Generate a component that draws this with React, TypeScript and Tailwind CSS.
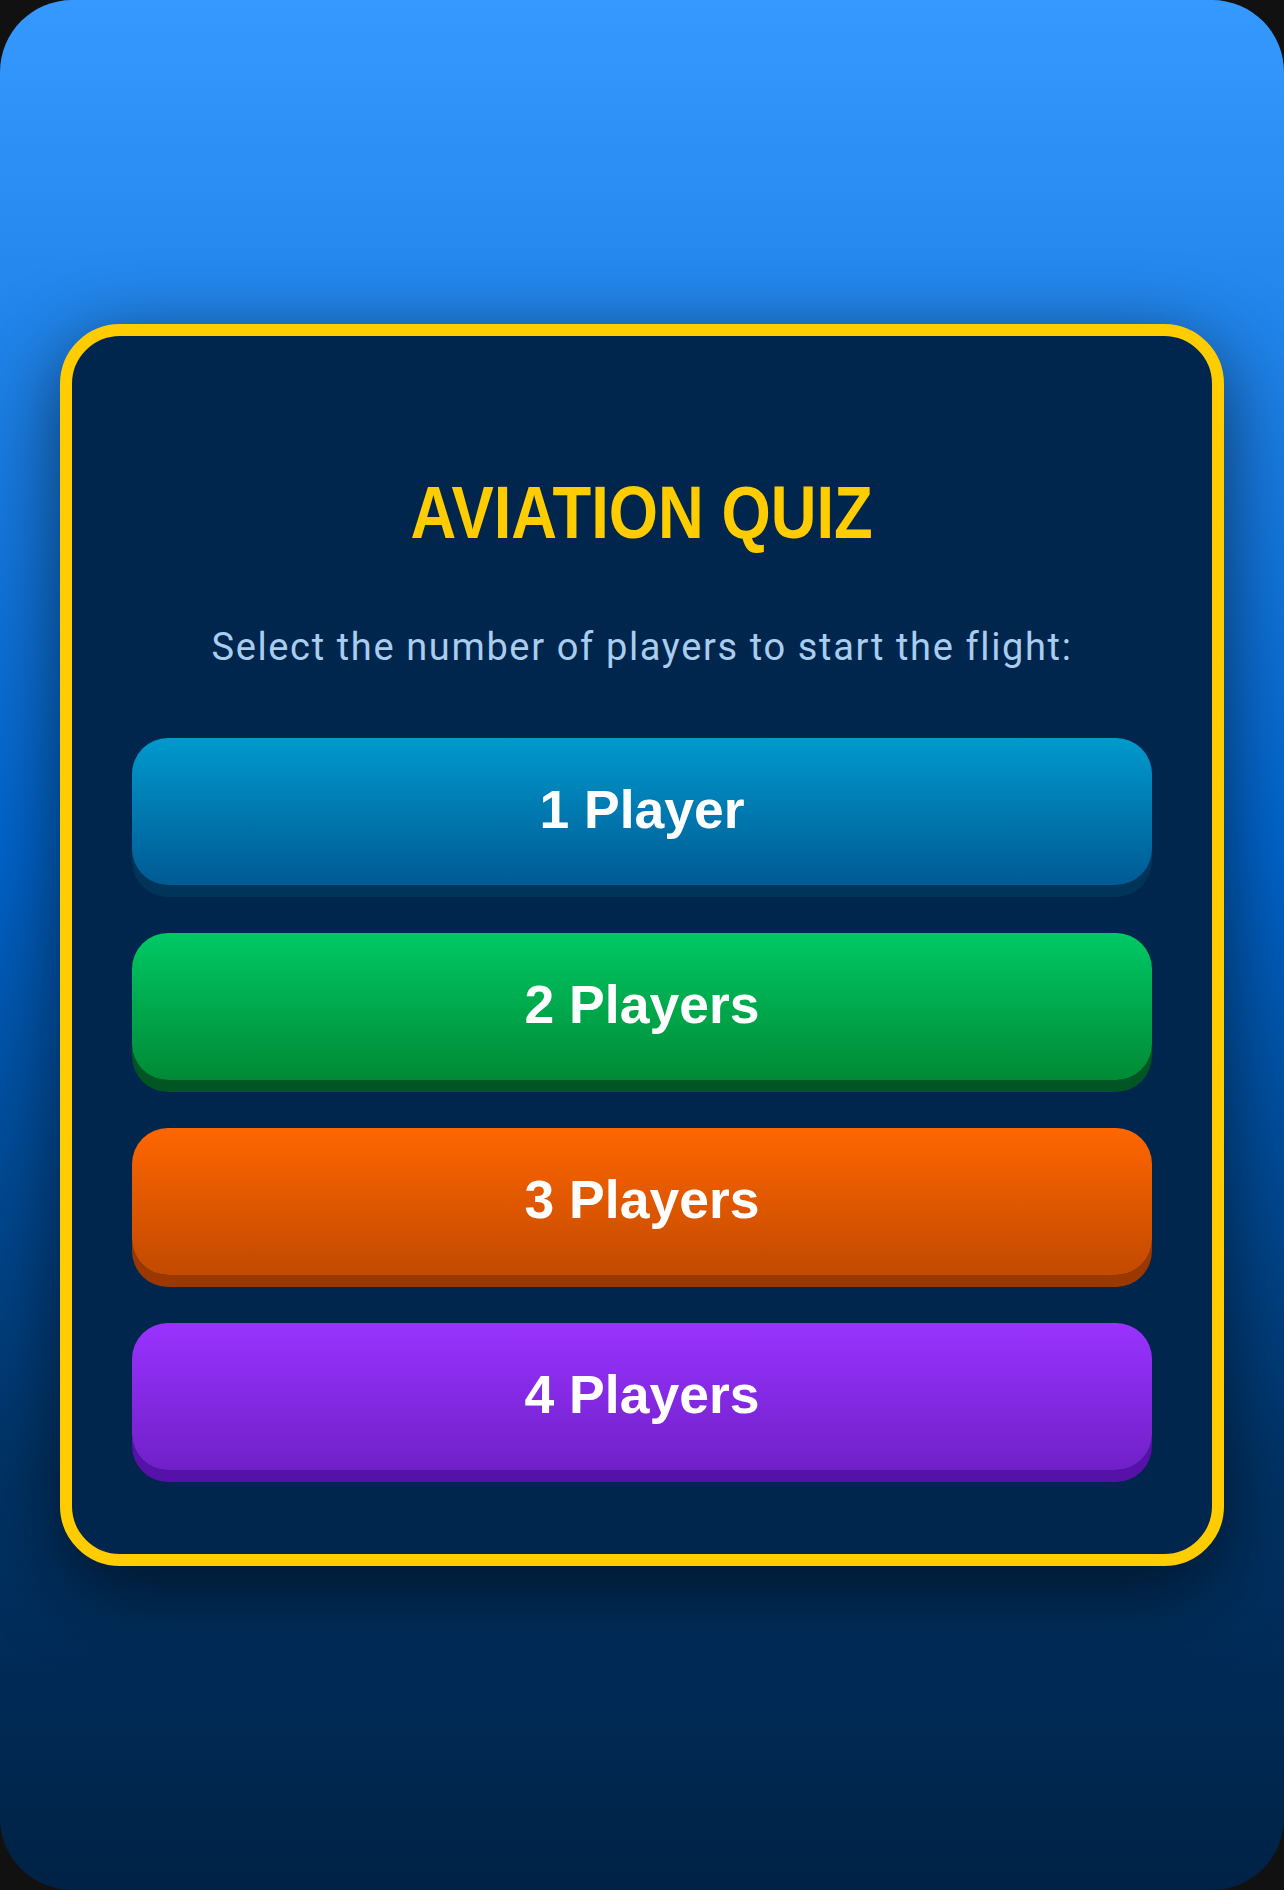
import React from "react";

const buttons = [
  {
    label: "1 Player",
    cls: "bg-gradient-to-b from-[#009acd] to-[#005a94] shadow-[0_12px_0_#003458]",
  },
  {
    label: "2 Players",
    cls: "bg-gradient-to-b from-[#00c965] to-[#008a35] shadow-[0_12px_0_#005522]",
  },
  {
    label: "3 Players",
    cls: "bg-gradient-to-b from-[#ff6600] to-[#c24a00] shadow-[0_12px_0_#9a3800]",
  },
  {
    label: "4 Players",
    cls: "bg-gradient-to-b from-[#9933ff] to-[#7020c8] shadow-[0_12px_0_#5511a8]",
  },
];

export default function App() {
  return (
    <div className="w-[1284px] h-[1890px] bg-[#111111]">
      <div className="w-full h-full rounded-[72px] bg-[linear-gradient(180deg,#3599ff_0%,#0064cb_45%,#003366_78%,#002246_100%)] flex items-center justify-center px-[60px]">
        <div className="w-full border-[12px] border-[#ffcc00] rounded-[60px] bg-[#00264d] shadow-[0_20px_80px_rgba(0,0,0,0.6)] px-[60px] pt-[139px] pb-[84px] flex flex-col items-center">
          <h1 className="h-[75px] text-[75px] leading-none font-bold text-[#ffcc00] font-['Liberation_Sans',Arial,sans-serif] whitespace-nowrap">
            <span className="inline-block scale-x-[0.845]">AVIATION QUIZ</span>
          </h1>
          <p className="mt-[79px] h-[36px] flex items-center text-[38px] leading-none tracking-[0.043em] text-[#a9cdef] font-['Roboto','Liberation_Sans',sans-serif] whitespace-nowrap">
            Select the number of players to start the flight:
          </p>
          <div className="mt-[73px] w-full flex flex-col gap-[48px]">
            {buttons.map((b) => (
              <button
                key={b.label}
                className={`w-full h-[147px] rounded-[36px] flex items-center justify-center pb-[4px] text-white text-[53.5px] leading-none font-bold font-['Liberation_Sans',Arial,sans-serif] ${b.cls}`}
              >
                {b.label}
              </button>
            ))}
          </div>
        </div>
      </div>
    </div>
  );
}
